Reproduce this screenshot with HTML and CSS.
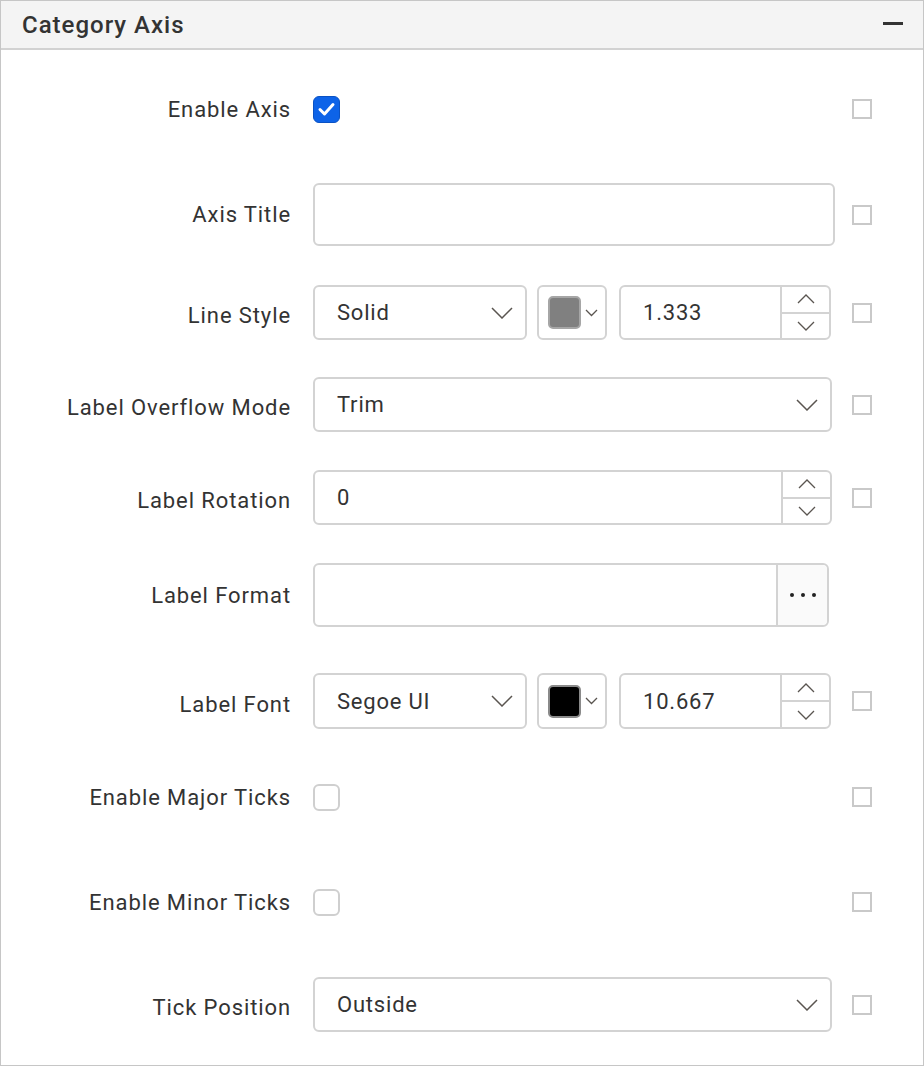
FILE: index.html
```html
<!DOCTYPE html>
<html>
<head>
<meta charset="utf-8">
<link rel="stylesheet" href="styles.css">
</head>
<body>
<div class="panel">
  <div class="panel-header">
    <span class="title">Category Axis</span>
    <span class="collapse"></span>
  </div>
  <div class="panel-body">
    <div class="row row-check sp-first">
      <div class="lbl">Enable Axis</div>
      <div class="ctrl"><span class="cb checked"><svg width="27" height="27" viewBox="0 0 27 27"><path d="M7 13.5 L11.5 18 L20 8.5" fill="none" stroke="#fff" stroke-width="3" stroke-linecap="round" stroke-linejoin="round"/></svg></span></div>
      <span class="side-cb"></span>
    </div>

    <div class="row row-tall sp-61">
      <div class="lbl">Axis Title</div>
      <div class="ctrl"><div class="input wide"></div></div>
      <span class="side-cb"></span>
    </div>

    <div class="row row-field sp-39">
      <div class="lbl">Line Style</div>
      <div class="ctrl split">
        <div class="input dd small"><span class="val">Solid</span><svg class="chev" width="22" height="12" viewBox="0 0 22 12"><path d="M1 1 L11 11 L21 1" fill="none" stroke="#5a5550" stroke-width="1.5"/></svg></div>
        <div class="input picker"><span class="swatch grey"></span><svg class="mini-chev" width="13" height="8" viewBox="0 0 13 8"><path d="M1 1 L6.5 6.5 L12 1" fill="none" stroke="#5a5550" stroke-width="1.3"/></svg></div>
        <div class="input num small"><span class="val">1.333</span><div class="spin"><span class="spin-btn"><svg width="18" height="10" viewBox="0 0 18 10"><path d="M1 9 L9 1 L17 9" fill="none" stroke="#5a5550" stroke-width="1.3"/></svg></span><span class="spin-btn"><svg width="18" height="10" viewBox="0 0 18 10"><path d="M1 1 L9 9 L17 1" fill="none" stroke="#5a5550" stroke-width="1.3"/></svg></span></div></div>
      </div>
      <span class="side-cb"></span>
    </div>

    <div class="row row-field sp-37">
      <div class="lbl">Label Overflow Mode</div>
      <div class="ctrl"><div class="input dd"><span class="val">Trim</span><svg class="chev" width="22" height="12" viewBox="0 0 22 12"><path d="M1 1 L11 11 L21 1" fill="none" stroke="#5a5550" stroke-width="1.5"/></svg></div></div>
      <span class="side-cb"></span>
    </div>

    <div class="row row-field sp-38">
      <div class="lbl">Label Rotation</div>
      <div class="ctrl"><div class="input num"><span class="val">0</span><div class="spin"><span class="spin-btn"><svg width="18" height="10" viewBox="0 0 18 10"><path d="M1 9 L9 1 L17 9" fill="none" stroke="#5a5550" stroke-width="1.3"/></svg></span><span class="spin-btn"><svg width="18" height="10" viewBox="0 0 18 10"><path d="M1 1 L9 9 L17 1" fill="none" stroke="#5a5550" stroke-width="1.3"/></svg></span></div></div></div>
      <span class="side-cb"></span>
    </div>

    <div class="row row-format sp-38">
      <div class="lbl">Label Format</div>
      <div class="ctrl"><div class="input format"><span class="val"></span><span class="more"><i></i><i></i><i></i></span></div></div>
    </div>

    <div class="row row-font sp-46">
      <div class="lbl">Label Font</div>
      <div class="ctrl split">
        <div class="input dd small"><span class="val">Segoe UI</span><svg class="chev" width="22" height="12" viewBox="0 0 22 12"><path d="M1 1 L11 11 L21 1" fill="none" stroke="#5a5550" stroke-width="1.5"/></svg></div>
        <div class="input picker"><span class="swatch black"></span><svg class="mini-chev" width="13" height="8" viewBox="0 0 13 8"><path d="M1 1 L6.5 6.5 L12 1" fill="none" stroke="#5a5550" stroke-width="1.3"/></svg></div>
        <div class="input num small"><span class="val">10.667</span><div class="spin"><span class="spin-btn"><svg width="18" height="10" viewBox="0 0 18 10"><path d="M1 9 L9 1 L17 9" fill="none" stroke="#5a5550" stroke-width="1.3"/></svg></span><span class="spin-btn"><svg width="18" height="10" viewBox="0 0 18 10"><path d="M1 1 L9 9 L17 1" fill="none" stroke="#5a5550" stroke-width="1.3"/></svg></span></div></div>
      </div>
      <span class="side-cb"></span>
    </div>

    <div class="row row-check sp-55">
      <div class="lbl">Enable Major Ticks</div>
      <div class="ctrl"><span class="cb"></span></div>
      <span class="side-cb"></span>
    </div>

    <div class="row row-check sp-79">
      <div class="lbl">Enable Minor Ticks</div>
      <div class="ctrl"><span class="cb"></span></div>
      <span class="side-cb"></span>
    </div>

    <div class="row row-field sp-62">
      <div class="lbl">Tick Position</div>
      <div class="ctrl"><div class="input dd"><span class="val">Outside</span><svg class="chev" width="22" height="12" viewBox="0 0 22 12"><path d="M1 1 L11 11 L21 1" fill="none" stroke="#5a5550" stroke-width="1.5"/></svg></div></div>
      <span class="side-cb"></span>
    </div>
  </div>
</div>
</body>
</html>
```
FILE: styles.css
```css
* { box-sizing: border-box; }
html, body { margin: 0; padding: 0; background: #fff; }
body { font-family: Roboto, "Noto Sans", sans-serif; color: #333; }

.panel {
  width: 924px;
  height: 1066px;
  border: 1px solid #c6c6c6;
  background: #fff;
}

.panel-header {
  height: 49px;
  background: #f4f4f4;
  border-bottom: 2px solid #d2d2d2;
  display: flex;
  align-items: center;
  justify-content: space-between;
  padding: 0 20px 0 21px;
}
.title {
  font-size: 24px;
  font-weight: 500;
  color: #333;
  letter-spacing: 1px;
}
.collapse {
  width: 20px;
  height: 3px;
  background: #333;
  margin-top: -2px;
}

.panel-body { display: flex; flex-direction: column; }

.row { display: flex; align-items: center; }
.row-check { height: 26px; }
.row-tall { height: 63px; }
.row-field { height: 55px; }
.row-format { height: 64px; }
.row-font { height: 56px; }

.sp-first { margin-top: 46px; }
.sp-61 { margin-top: 61px; }
.sp-39 { margin-top: 39px; }
.sp-37 { margin-top: 37px; }
.sp-38 { margin-top: 38px; }
.sp-46 { margin-top: 46px; }
.sp-55 { margin-top: 55px; }
.sp-79 { margin-top: 79px; }
.sp-62 { margin-top: 62px; }

.lbl {
  width: 290px;
  margin-right: 22px;
  text-align: right;
  font-size: 22px;
  letter-spacing: 0.9px;
  color: #333;
  white-space: nowrap;
  flex: none;
}
.row-field .lbl,
.row-font .lbl { padding-top: 6px; }

.ctrl {
  width: 519px;
  height: 100%;
  display: flex;
  align-items: center;
  flex: none;
}

.side-cb {
  width: 20px;
  height: 20px;
  border: 2px solid #c9c9c9;
  margin-left: 20px;
  flex: none;
}

.cb {
  width: 27px;
  height: 27px;
  border: 2px solid #cfcfcf;
  border-radius: 6px;
  display: block;
  background: #fff;
}
.cb.checked {
  background: #0d63e8;
  border: 1px solid #0a52c4;
}
.cb.checked svg { display: block; margin: -1px; }

.input {
  height: 100%;
  width: 100%;
  border: 2px solid #d3d3d3;
  border-radius: 6px;
  background: #fff;
  display: flex;
  align-items: center;
  font-size: 22px;
  letter-spacing: 0.8px;
  color: #333;
  flex: none;
}
.input.wide { width: 522px; }
.val { padding-left: 22px; flex: 1; }

.dd .chev { margin-right: 12px; flex: none; }
.dd.small { width: 214px; }

.picker {
  width: 70px;
  margin: 0 12px 0 10px;
  padding-left: 9px;
}
.swatch {
  width: 33px;
  height: 33px;
  border-radius: 5px;
  border: 2px solid #a6a6a6;
  display: block;
}
.swatch.grey { background: #808080; }
.swatch.black { background: #000; border-color: #8a8a8a; }
.mini-chev { margin-left: 4px; }

.num .spin {
  width: 49px;
  height: 100%;
  border-left: 2px solid #d3d3d3;
  display: flex;
  flex-direction: column;
  flex: none;
}
.num.small { width: 212px; }
.spin-btn {
  flex: 1;
  display: flex;
  align-items: center;
  justify-content: center;
}
.spin-btn + .spin-btn { border-top: 2px solid #d3d3d3; }

.format { width: 516px; }
.more {
  width: 51px;
  height: 100%;
  border-left: 2px solid #d3d3d3;
  background: #fafafa;
  border-radius: 0 5px 5px 0;
  display: flex;
  align-items: center;
  justify-content: center;
  gap: 7px;
  flex: none;
}
.more i {
  width: 4px;
  height: 4px;
  border-radius: 50%;
  background: #222;
  display: block;
}
```
